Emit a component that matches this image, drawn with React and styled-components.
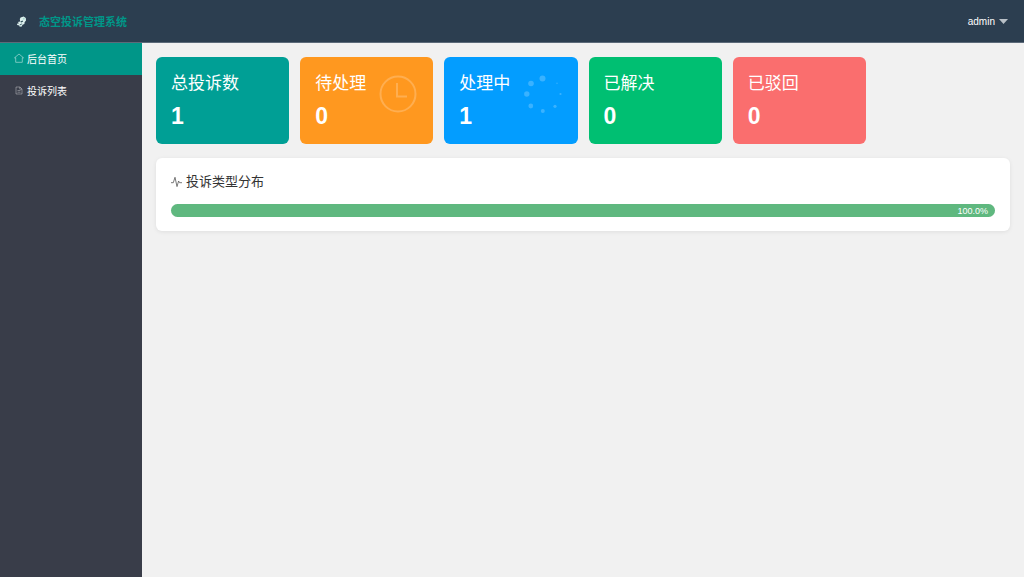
import React, { useState } from "react";
import styled, { createGlobalStyle } from 'styled-components';

const GlobalStyle = createGlobalStyle`
    * {
        box-sizing: border-box;
    }
    body {
        margin: 0;
        background: #f1f1f1;
        font-family: "Liberation Sans", "Noto Sans CJK SC", sans-serif;
    }
    h1, h2, p, ul {
        margin: 0;
        padding: 0;
    }
`;

const Container = styled.div`
    min-height: 100vh;
    display: flex;
    flex-direction: column;
`;

const Header = styled.header`
    height: 43px;
    padding: 2px 16px 0;
    display: flex;
    align-items: center;
    justify-content: space-between;
    background: #2c3e50;
    border-bottom: 1px solid #5c6a79;
`;

const Brand = styled.div`
    display: flex;
    align-items: center;
    gap: 12px;
`;

const BrandName = styled.h1`
    color: #009688;
    font-size: 11px;
    line-height: 16px;
    font-weight: 700;
`;

const UserButton = styled.button`
    display: flex;
    align-items: center;
    gap: 4px;
    padding: 0;
    border: 0;
    background: none;
    color: #fff;
    font-family: inherit;
    font-size: 10px;
    line-height: 16px;
    cursor: pointer;
`;

const Body = styled.div`
    flex: 1;
    display: flex;
`;

const Sidebar = styled.nav`
    flex: 0 0 142px;
    background: #393d49;
`;

const Menu = styled.ul`
    list-style: none;
`;

const MenuLink = styled.a`
    height: 32px;
    padding: 0 14px 2px;
    display: flex;
    align-items: center;
    gap: 3px;
    color: #fff;
    font-size: 10px;
    text-decoration: none;
    background: ${(props) => props.$active ? "#009688" : "transparent"};
`;

const Content = styled.main`
    flex: 1;
    min-width: 0;
    padding: 14px;
`;

const CardGrid = styled.div`
    display: grid;
    grid-template-columns: repeat(6, 1fr);
    gap: 11px;
`;

const Card = styled.section`
    height: 87px;
    padding: 14px 15px;
    display: flex;
    justify-content: space-between;
    border-radius: 6px;
    color: #fff;
    background: ${(props) => props.$color};
`;

const CardTitle = styled.h2`
    font-size: 17px;
    line-height: 26px;
    font-weight: 400;
    white-space: nowrap;
`;

const CardNumber = styled.p`
    margin-top: 5px;
    font-size: 23px;
    line-height: 28px;
    font-weight: 700;
`;

const CardIcon = styled.svg`
    flex: none;
    width: 38px;
    height: 38px;
    margin: 4px 1px 0 0;
`;

const Panel = styled.section`
    margin-top: 14px;
    padding: 14px 15px;
    border-radius: 6px;
    background: #fff;
    box-shadow: 0 1px 4px rgba(0, 0, 0, 0.08);
`;

const PanelTitle = styled.h2`
    display: flex;
    align-items: center;
    gap: 4px;
    color: #333;
    font-size: 13px;
    line-height: 20px;
    font-weight: 400;
`;

const Progress = styled.div`
    height: 13px;
    margin-top: 12px;
    border-radius: 7px;
    background: #e2e2e2;
`;

const ProgressBar = styled.div`
    height: 100%;
    padding-right: 7px;
    border-radius: 7px;
    background: #5fb87f;
    color: #fff;
    font-size: 9px;
    line-height: 14px;
    text-align: right;
`;

const Logo = () => (
    <svg width="11" height="12" viewBox="0 0 11 12" aria-hidden="true">
        <path d="M4.6 1.4 7.6.6 9.8 2 10 4.6 8.6 6.2 8.4 8 6.6 8.8 5.4 10.8 3.4 10.6 3.4 9.4 1.2 9 1 7.8 3 7.2 1.8 6 4.2 5.4 3.8 3Z" fill="#dcefed" />
        <path d="M4.2 5.8 6.4 4.6 7.2 5.4 5.2 6.6ZM3.4 8.8 6 7.4 6.2 8 4.4 9.2Z" fill="#2c4d57" />
        <circle cx="7.8" cy="2.8" r="1" fill="#a8d7ce" />
    </svg>
);

const HomeIcon = () => (
    <svg width="10" height="10" viewBox="0 0 10 10" fill="none" stroke="#fff" strokeOpacity="0.65" strokeWidth="0.7" aria-hidden="true">
        <path d="M.5 4.8 5 1 9.5 4.8H8.3V9.3H1.7V4.8Z" />
    </svg>
);

const FileIcon = () => (
    <svg width="10" height="10" viewBox="0 0 10 10" fill="none" stroke="#fff" strokeOpacity="0.5" strokeWidth="0.7" aria-hidden="true">
        <path d="M2 2H6L8 4V9H2ZM5.8 2V4.2H8M3.5 5.5H6.5M3.5 7.2H6.5" />
    </svg>
);

const PulseIcon = () => (
    <svg width="11" height="12" viewBox="0 0 11 12" fill="none" stroke="#555" strokeWidth="0.8" strokeLinejoin="round" aria-hidden="true">
        <path d="M0 6.7H2.3L4 1.3 6 10.6 7.6 5 8.5 6.7H11" />
    </svg>
);

const ClockIcon = () => (
    <CardIcon viewBox="0 0 38 38" fill="none" stroke="#fff" strokeOpacity="0.22" strokeWidth="2" aria-hidden="true">
        <circle cx="19" cy="19" r="17.5" />
        <path d="M18 8V21.5H28" />
    </CardIcon>
);

const dots = [
    [18.5, 3.5, 3], [7, 8.5, 2.8], [2.8, 19, 2.7], [6.8, 31, 2.4],
    [18.8, 36, 2], [31, 31.3, 1.6], [36.5, 19, 1.1], [33, 8.3, 0.7],
];

const LoadingIcon = () => (
    <CardIcon viewBox="0 0 38 38" fill="#fff" fillOpacity="0.22" aria-hidden="true">
        {dots.map(([x, y, r]) => <circle key={`${x}-${y}`} cx={x} cy={y} r={r} />)}
    </CardIcon>
);

const menus = [
    { name: "后台首页", icon: <HomeIcon /> },
    { name: "投诉列表", icon: <FileIcon /> },
];

const cards = [
    { title: "总投诉数", count: 1, color: "#009f95" },
    { title: "待处理", count: 0, color: "#ff981f", icon: <ClockIcon /> },
    { title: "处理中", count: 1, color: "#039dff", icon: <LoadingIcon /> },
    { title: "已解决", count: 0, color: "#00bf72" },
    { title: "已驳回", count: 0, color: "#fa6e6e" },
];

const App = () => {

    const [active, setActive] = useState("后台首页");
    const percent = 100;

    return (
        <>
            <GlobalStyle />
            <Container>
                <Header>
                    <Brand>
                        <Logo />
                        <BrandName>态空投诉管理系统</BrandName>
                    </Brand>
                    <UserButton type="button">
                        admin
                        <svg width="9" height="7" viewBox="0 0 9 7" aria-hidden="true">
                            <path d="M0 0H9L4.5 5Z" fill="#b9c0c7" />
                        </svg>
                    </UserButton>
                </Header>
                <Body>
                    <Sidebar>
                        <Menu>
                            {menus.map((menu) => (
                                <li key={menu.name}>
                                    <MenuLink href="#" $active={menu.name === active} onClick={() => setActive(menu.name)}>
                                        {menu.icon}
                                        {menu.name}
                                    </MenuLink>
                                </li>
                            ))}
                        </Menu>
                    </Sidebar>
                    <Content>
                        <CardGrid>
                            {cards.map((card) => (
                                <Card key={card.title} $color={card.color}>
                                    <div>
                                        <CardTitle>{card.title}</CardTitle>
                                        <CardNumber>{card.count}</CardNumber>
                                    </div>
                                    {card.icon}
                                </Card>
                            ))}
                        </CardGrid>
                        <Panel>
                            <PanelTitle>
                                <PulseIcon />
                                投诉类型分布
                            </PanelTitle>
                            <Progress>
                                <ProgressBar style={{ width: `${percent}%` }}>{percent.toFixed(1)}%</ProgressBar>
                            </Progress>
                        </Panel>
                    </Content>
                </Body>
            </Container>
        </>
    );
}

export default App;
